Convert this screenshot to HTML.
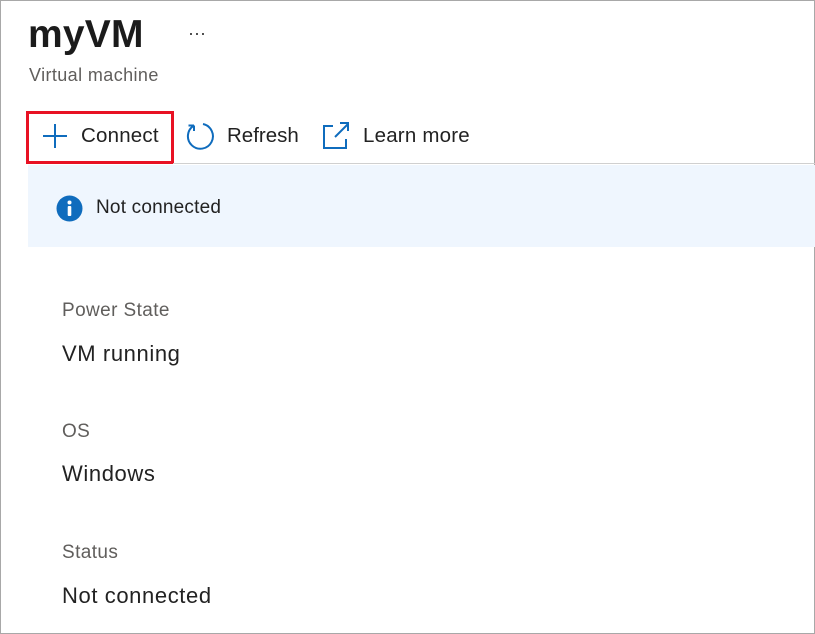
<!DOCTYPE html>
<html><head><style>
*{margin:0;padding:0;box-sizing:border-box}
body{width:815px;height:634px;background:#fff;font-family:"Segoe UI","Liberation Sans",sans-serif;color:#222;position:relative;overflow:hidden;border:1px solid #a8a8a8}
.a{position:absolute;white-space:nowrap}
</style></head><body>
<div class="a" style="left:27px;top:12px;font-size:39px;font-weight:bold;color:#1b1b1b;letter-spacing:0.2px">myVM</div>
<div class="a" style="left:187px;top:22px;font-size:18px;color:#333">···</div>
<div class="a" style="left:28px;top:64px;font-size:18px;color:#605e5c;letter-spacing:0.4px">Virtual machine</div>
<div class="a" style="left:25px;top:110px;width:148px;height:53px;border:3px solid #e81123"></div>
<svg class="a" style="left:40px;top:121px" width="28" height="28" viewBox="0 0 28 28"><path d="M14 2v24M2 14h24" stroke="#0f6cbd" stroke-width="2" fill="none"/></svg>
<div class="a" style="left:80px;top:123px;font-size:20.5px;color:#222;letter-spacing:0.2px">Connect</div>
<svg class="a" style="left:184px;top:120px" width="30" height="30" viewBox="0 0 30 30"><path d="M9 4.5A12.5 12.5 0 1 0 18 3" stroke="#0f6cbd" stroke-width="2" fill="none"/><path d="M9 4.5V10M9 4.5H3.5" stroke="#0f6cbd" stroke-width="2" fill="none"/></svg>
<div class="a" style="left:226px;top:123px;font-size:20.5px;color:#222">Refresh</div>
<svg class="a" style="left:320px;top:120px" width="30" height="30" viewBox="0 0 30 30"><path d="M12 5H3v22h22v-9" stroke="#0f6cbd" stroke-width="2" fill="none"/><path d="M14 16L27 3M19 2h8v8" stroke="#0f6cbd" stroke-width="2" fill="none"/></svg>
<div class="a" style="left:362px;top:123px;font-size:20.5px;color:#222;letter-spacing:0.2px">Learn more</div>
<div class="a" style="left:172px;top:162px;width:643px;height:1px;background:#d0d0d0"></div>
<div class="a" style="left:27px;top:164px;width:790px;height:82px;background:#eff6fe"></div>
<svg class="a" style="left:55px;top:194px" width="27" height="27" viewBox="0 0 27 27"><circle cx="13.5" cy="13.5" r="13" fill="#0f6cbd"/><circle cx="13.5" cy="7.5" r="2" fill="#fff"/><rect x="11.7" y="11" width="3.6" height="10" rx="1" fill="#fff"/></svg>
<div class="a" style="left:95px;top:196px;font-size:19px;color:#222;letter-spacing:0.2px">Not connected</div>
<div class="a" style="left:61px;top:299px;font-size:19px;color:#605e5c;letter-spacing:0.4px">Power State</div>
<div class="a" style="left:61px;top:340px;font-size:22px;color:#222;letter-spacing:0.6px">VM running</div>
<div class="a" style="left:61px;top:420px;font-size:19px;color:#605e5c;letter-spacing:0.4px">OS</div>
<div class="a" style="left:61px;top:460px;font-size:22px;color:#222;letter-spacing:0.6px">Windows</div>
<div class="a" style="left:61px;top:541px;font-size:19px;color:#605e5c;letter-spacing:0.4px">Status</div>
<div class="a" style="left:61px;top:582px;font-size:22px;color:#222;letter-spacing:0.6px">Not connected</div>
</body></html>
